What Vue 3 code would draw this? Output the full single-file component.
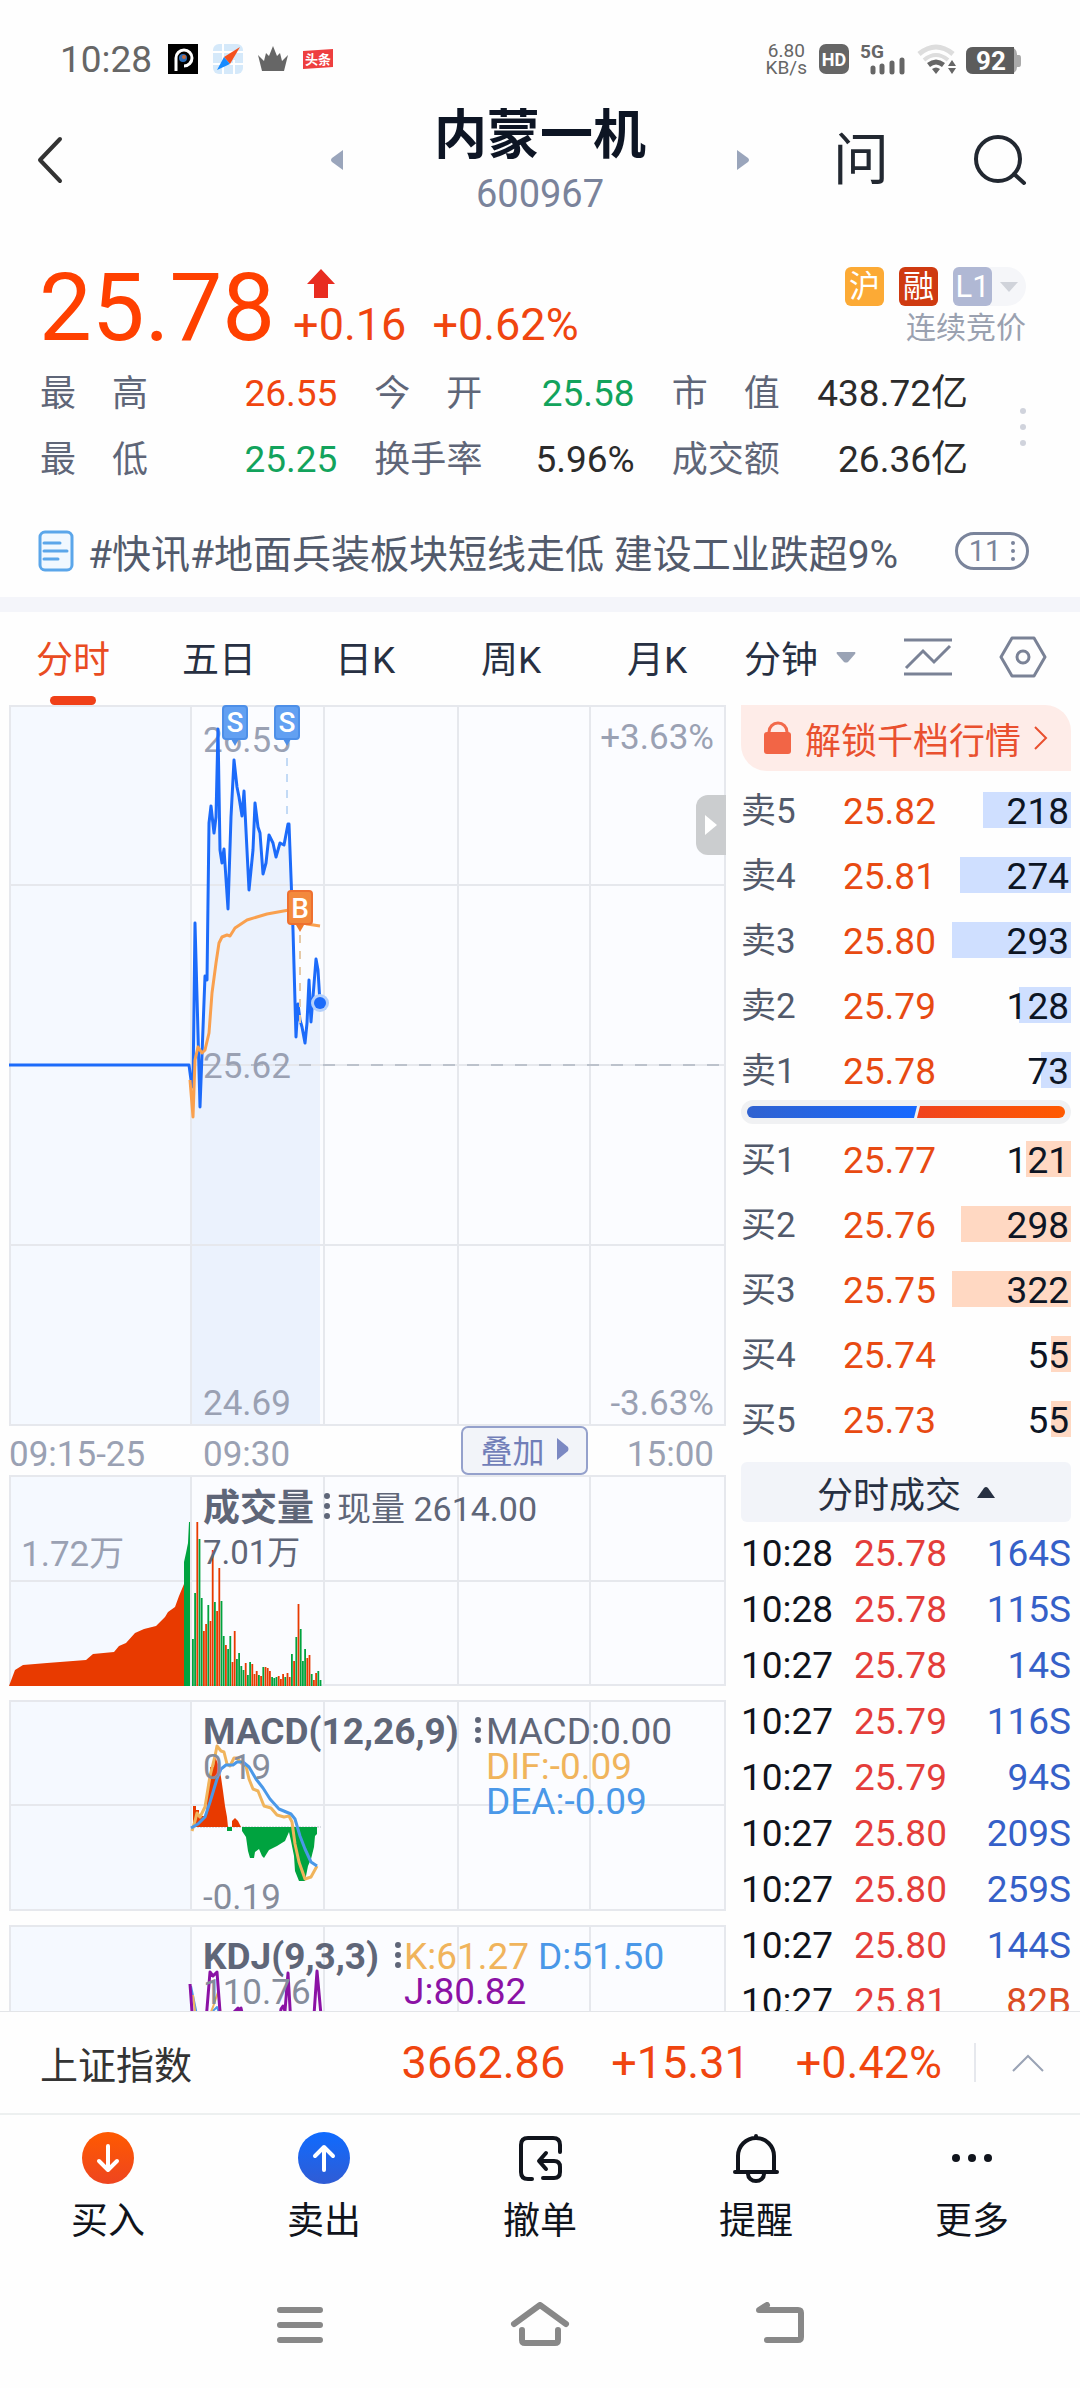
<script setup>
import { ref } from "vue";

// quote
const stats = [
  { label: "最高", value: "26.55", tone: "up" },
  { label: "今开", value: "25.58", tone: "down" },
  { label: "市值", value: "438.72亿", tone: "" },
  { label: "最低", value: "25.25", tone: "down" },
  { label: "换手率", value: "5.96%", tone: "" },
  { label: "成交额", value: "26.36亿", tone: "" },
];

const tabs = ["分时", "五日", "日K", "周K", "月K"];
const activeTab = ref("分时");

// order book
const asks = [
  { label: "卖5", price: "25.82", volume: 218 },
  { label: "卖4", price: "25.81", volume: 274 },
  { label: "卖3", price: "25.80", volume: 293 },
  { label: "卖2", price: "25.79", volume: 128 },
  { label: "卖1", price: "25.78", volume: 73 },
];
const bids = [
  { label: "买1", price: "25.77", volume: 121 },
  { label: "买2", price: "25.76", volume: 298 },
  { label: "买3", price: "25.75", volume: 322 },
  { label: "买4", price: "25.74", volume: 55 },
  { label: "买5", price: "25.73", volume: 55 },
];
const trades = [
  { time: "10:28", price: "25.78", volume: "164S" },
  { time: "10:28", price: "25.78", volume: "115S" },
  { time: "10:27", price: "25.78", volume: "14S" },
  { time: "10:27", price: "25.79", volume: "116S" },
  { time: "10:27", price: "25.79", volume: "94S" },
  { time: "10:27", price: "25.80", volume: "209S" },
  { time: "10:27", price: "25.80", volume: "259S" },
  { time: "10:27", price: "25.80", volume: "144S" },
  { time: "10:27", price: "25.81", volume: "82B" },
];

// charts
const columns = [182, 315, 449, 581];
const priceLine =
  "0,360 180,360 182,375 184,382 186,218 191,402 196,271 198,275 200,118 202,101 205,128 207,112 209,24 211,145 213,158 215,144 219,204 222,112 225,55 228,82 230,92 233,111 235,86 240,185 244,145 246,98 249,122 251,128 254,169 257,158 260,130 264,138 267,152 271,138 275,140 279,119 280,119 284,225 287,332 289,299 291,315 293,322 296,338 298,318 300,275 302,317 307,254 309,265 311,298";
const averageLine =
  "181,375 184,412 186,355 189,342 193,348 196,345 200,328 203,288 207,258 210,238 213,232 218,230 221,231 226,223 238,215 258,209 280,205 288,215 298,219 311,221";
const priceArea = "182,720 " + priceLine.split(" ").slice(2).join(" ") + " 311,720";
const auctionArea =
  "0,211 6,195 14,190 38,188 77,185 84,179 105,177 110,171 117,168 126,158 135,154 147,151 156,142 159,137 166,132 170,121 175,109 175,211";
const volumes = [
  47, 93, 164, 147, 88, 55, 62, 81, 65, 136, 84, 75, 118, 85, 50, 41, 37, 50, 24, 55,
  27, 33, 20, 16, 23, 11, 24, 22, 12, 15, 11, 10, 19, 19, 18, 15, 9, 8, 9, 10,
  7, 12, 9, 13, 9, 32, 25, 49, 82, 57, 25, 37, 28, 31, 12, 6, 13, 15, 6,
];
const volumeTones = "ggrggrrgrrgrrggrggrrggggrggrrrgrgrrrgggrrrgrrgrgrgggrrgrrgg";
const macdRed =
  "184,127 184,106 187,106 187,110 190,110 190,116 197,116 199,82 201,82 201,67 205,67 206,56 209,64 212,77 214,91 216,106 218,117 219,127";
const macdRedTail = "223,127 223,121 226,118 229,121 232,127";
const macdGreen =
  "218,127 218,131 223,131 223,127 233,127 233,131 237,137 239,151 241,158 245,158 246,152 250,149 253,156 255,158 260,150 268,146 276,141 280,132 282,141 285,156 286,171 290,181 296,181 299,166 302,159 305,147 306,136 308,134 308,127";
const difLine =
  "183,131 186,121 188,113 191,117 196,107 201,76 206,56 208,46 212,51 215,52 218,64 221,66 225,58 228,58 233,64 237,66 240,79 244,89 249,91 255,106 262,108 268,115 275,117 280,116 283,122 286,144 290,162 296,179 302,177 308,166";
const deaLine =
  "182,128 189,124 196,117 201,102 208,79 212,69 217,65 224,65 228,62 234,62 240,67 247,79 254,88 261,99 270,109 282,114 286,119 291,136 296,149 302,162 308,166";

// functions
function barWidth(row, side) {
  const max = Math.max(...side.map((item) => item.volume));
  return `${(row.volume / max) * 36}%`;
}
function volumeColor(index) {
  return volumeTones[index] === "r" ? "#e83a00" : "#00a33f";
}
</script>

<template>
  <div class="page">
    <div class="status">
      <span class="clock">10:28</span>
      <svg width="165" height="30" viewBox="0 0 165 30">
        <rect width="30" height="30" fill="#000" />
        <path d="M8 27V14a8 8 0 1 1 8 8" fill="none" stroke="#fff" stroke-width="3" />
        <circle cx="15" cy="14" r="4" fill="#2b6cb8" />
        <circle cx="16" cy="13" r="2" fill="#c56b3c" />
        <rect x="45" width="30" height="30" rx="6" fill="#d5e9fa" />
        <path d="M45 8h30M55 0v30M66 16v14M45 20h30" stroke="#fff" stroke-width="2" />
        <path d="M72 3 56 13l6 7z" fill="#f4511e" />
        <path d="M49 26l7-13 6 7z" fill="#168bff" />
        <path d="M90 11l6 6 2-8 3 3 4-10 4 10 3-3 2 8 6-6-4 16H94z" fill="#666" />
        <path d="M135 7l30-2v18l-30 2z" fill="#ee3f3f" />
        <text x="150" y="20" text-anchor="middle" font-size="13" font-weight="700" fill="#fff">头条</text>
      </svg>
      <div class="status-right">
        <span class="speed">6.80<br />KB/s</span>
        <svg width="202" height="32" viewBox="0 0 202 32">
          <rect y="1" width="30" height="30" rx="7" fill="#666" />
          <text x="15" y="23" text-anchor="middle" font-size="18" font-weight="700" fill="#fff">HD</text>
          <text x="41" y="15" font-size="19" font-weight="700" fill="#666">5G</text>
          <path d="M54 29v-4M63 29v-6M73 29v-9M83 29V17" stroke="#666" stroke-width="5" stroke-linecap="round" />
          <path d="M100 11q17-14 34 0" fill="none" stroke="#ddd" stroke-width="5" />
          <path d="M105 17q12-10 24 0" fill="none" stroke="#ddd" stroke-width="4" />
          <path d="M108 20q9-7 18 0l-3 4q-6-5-12 0zM113 26q4-3 8 0l-4 5z" fill="#666" />
          <path d="M129 23h8l-4-6zM129 25h8l-4 6z" fill="#666" />
          <rect x="147" y="4" width="51" height="27" rx="7" fill="#aaa" />
          <path d="M198 12h2q2 0 2 3v6q0 3-2 3h-2z" fill="#aaa" />
          <path d="M154 4h41v27h-41q-7 0-7-7V11q0-7 7-7z" fill="#5c5c5c" />
          <text x="172" y="27" text-anchor="middle" font-size="26" font-weight="700" fill="#fff">92</text>
        </svg>
      </div>
    </div>

    <header class="header">
      <button class="back" aria-label="返回">
        <svg width="26" height="48" viewBox="0 0 26 48">
          <path d="M23 3 3 24l20 21" fill="none" stroke="#333" stroke-width="4" stroke-linecap="round" stroke-linejoin="round" />
        </svg>
      </button>
      <div class="switcher">
        <button aria-label="上一只">
          <svg width="12" height="20" viewBox="0 0 12 20"><path d="M12 0v20L1 12q-2-2 0-4z" fill="#9aa5bb" /></svg>
        </button>
        <div class="name">
          <h1>内蒙一机</h1>
          <span>600967</span>
        </div>
        <button aria-label="下一只">
          <svg width="12" height="20" viewBox="0 0 12 20"><path d="M0 0v20l11-8q2-2 0-4z" fill="#9aa5bb" /></svg>
        </button>
      </div>
      <div class="tools">
        <button class="ask">问</button>
        <button aria-label="搜索">
          <svg width="56" height="56" viewBox="0 0 56 56">
            <circle cx="26" cy="27" r="22" fill="none" stroke="#222831" stroke-width="4" />
            <path d="M42 42l10 9" stroke="#222831" stroke-width="4" stroke-linecap="round" />
          </svg>
        </button>
      </div>
    </header>

    <section class="quote">
      <strong class="price">25.78</strong>
      <div class="change">
        <svg width="28" height="30" viewBox="0 0 28 30"><path d="M14 0l14 15h-7v14H7V15H0z" fill="#e82c20" /></svg>
        <div><span>+0.16</span><span>+0.62%</span></div>
      </div>
      <div class="marks">
        <div class="badges">
          <span class="badge hu">沪</span>
          <span class="badge rong">融</span>
          <button class="level">
            <span class="badge">L1</span>
            <svg width="18" height="10" viewBox="0 0 18 10"><path d="M0 0h18L9 10z" fill="#d0d3da" /></svg>
          </button>
        </div>
        <span>连续竞价</span>
      </div>
    </section>

    <section class="stats">
      <dl>
        <div v-for="item in stats" :key="item.label">
          <dt><span v-for="char in item.label" :key="char">{{ char }}</span></dt>
          <dd :class="item.tone">{{ item.value }}</dd>
        </div>
      </dl>
      <svg width="8" height="40" viewBox="0 0 8 40" fill="#d0d3dc">
        <circle cx="4" cy="4" r="3" />
        <circle cx="4" cy="20" r="3" />
        <circle cx="4" cy="36" r="3" />
      </svg>
    </section>

    <div class="news">
      <svg width="36" height="42" viewBox="0 0 36 42" fill="none" stroke="#5ba6ea" stroke-width="3" stroke-linecap="round">
        <rect x="2" y="2" width="32" height="38" rx="5" fill="#f1f8ff" />
        <path d="M6 13h16M6 21h23M6 29h14" />
      </svg>
      <a href="#">#快讯#地面兵装板块短线走低 建设工业跌超9%</a>
      <button class="count">
        11
        <svg width="4" height="20" viewBox="0 0 4 20" fill="#7a849b">
          <circle cx="2" cy="2" r="2" />
          <circle cx="2" cy="10" r="2" />
          <circle cx="2" cy="18" r="2" />
        </svg>
      </button>
    </div>

    <nav class="tabs">
      <button
        v-for="tab in tabs"
        :key="tab"
        :class="{ active: tab === activeTab }"
        @click="activeTab = tab"
      >
        {{ tab }}
      </button>
      <div class="tab-tools">
        <button class="minute">
          分钟
          <svg width="20" height="11" viewBox="0 0 20 11"><path d="M1 0h18q1 1 0 2l-7 8q-2 1-4 0L1 2q-1-1 0-2z" fill="#9aa3b5" /></svg>
        </button>
        <button aria-label="画线">
          <svg width="50" height="38" viewBox="0 0 50 38" fill="none" stroke="#7a8296" stroke-width="3">
            <path d="M1 2h48M1 36h48M3 30l17-17 11 11L47 8" />
          </svg>
        </button>
        <button aria-label="设置">
          <svg width="48" height="42" viewBox="0 0 48 42" fill="none" stroke="#7a8296" stroke-width="3">
            <path d="M13 2h22l11 19-11 19H13L2 21z" stroke-linejoin="round" />
            <circle cx="24" cy="21" r="6" />
          </svg>
        </button>
      </div>
    </nav>

    <main class="market">
      <div class="charts">
        <div class="main-chart">
          <svg viewBox="0 0 717 721">
            <rect width="717" height="721" fill="#fbfcff" />
            <rect width="182" height="721" fill="#f5f9ff" />
            <text x="194" y="47" class="axis">26.55</text>
            <polygon :points="priceArea" fill="#ebf2fd" />
            <g class="grid">
              <path d="M0 1h717M0 180h717M0 360h717M0 540h717M0 720h717M1 0v721M716 0v721" />
              <path v-for="x in columns" :key="x" :d="`M${x} 0v721`" />
            </g>
            <path d="M194 360h523" stroke="#bcc2cc" stroke-width="2" stroke-dasharray="12 12" />
            <text x="194" y="373" class="axis">25.62</text>
            <text x="194" y="710" class="axis">24.69</text>
            <text x="705" y="44" class="axis" text-anchor="end">+3.63%</text>
            <text x="705" y="710" class="axis" text-anchor="end">-3.63%</text>
            <path d="M278 53v60" stroke="#8ab8ec" stroke-width="1" stroke-dasharray="8 8" />
            <polyline :points="priceLine" class="line" stroke="#1c6bfa" stroke-width="3" />
            <polyline :points="averageLine" class="line" stroke="#f9a04e" stroke-width="3" />
            <path d="M291 230v88" stroke="#e5c9a6" stroke-width="2" stroke-dasharray="8 8" />
            <circle cx="311" cy="298" r="9" fill="#b5d0fb" />
            <circle cx="311" cy="298" r="6" fill="#1c6bfa" />
            <g v-for="x in [226, 278]" :key="x">
              <path :d="`M${x - 4} 34h8l-4 7z`" fill="#4d8fe8" />
              <rect :x="x - 12" y="1" width="24" height="33" rx="3" fill="#62a0f2" stroke="#4d8fe8" stroke-width="2" />
              <text :x="x" y="27" class="flag">S</text>
            </g>
            <path d="M287 220h8l-4 7z" fill="#f07a2c" />
            <rect x="279" y="186" width="24" height="33" rx="3" fill="#f3893c" stroke="#ee7030" stroke-width="2" />
            <text x="291" y="213" class="flag">B</text>
          </svg>
          <button class="fold" aria-label="收起">
            <svg width="12" height="20" viewBox="0 0 12 20"><path d="M0 0l12 10L0 20z" fill="#fff" /></svg>
          </button>
        </div>

        <div class="times">
          <span>09:15-25</span>
          <span>09:30</span>
          <button>
            叠加
            <svg width="12" height="22" viewBox="0 0 12 22"><path d="M0 0l11 9q1 2 0 4L0 22z" fill="#7b88c2" /></svg>
          </button>
          <span class="end">15:00</span>
        </div>

        <svg viewBox="0 0 717 211">
          <rect width="717" height="211" fill="#fbfcff" />
          <rect width="182" height="211" fill="#f5f9ff" />
          <g class="grid">
            <path d="M0 1h717M0 106h717M0 210h717M1 0v211M716 0v211" />
            <path v-for="x in columns" :key="x" :d="`M${x} 0v211`" />
          </g>
          <polygon :points="auctionArea" fill="#e83a00" />
          <path d="M175 211V87l2-9 2-10 1-21h1v164z" fill="#00a33f" />
          <rect
            v-for="(height, i) in volumes"
            :key="i"
            :x="183 + i * 2.2"
            :y="211 - height"
            width="1.8"
            :height="height"
            :fill="volumeColor(i)"
          />
          <text x="194" y="46" class="title">成交量</text>
          <path d="M318 21v28" class="dots" />
          <text x="328" y="46" font-size="34" fill="#5f6678">现量 2614.00</text>
          <text x="194" y="89" font-size="33" fill="#5f6678">7.01万</text>
          <text x="12" y="91" class="axis">1.72万</text>
        </svg>

        <svg viewBox="0 0 717 211">
          <rect width="717" height="211" fill="#fbfcff" />
          <rect width="182" height="211" fill="#f5f9ff" />
          <g class="grid">
            <path d="M0 1h717M0 105h717M0 210h717M1 0v211M716 0v211" />
            <path v-for="x in columns" :key="x" :d="`M${x} 0v211`" />
          </g>
          <path d="M182 127h130" stroke="#bcc2cc" stroke-dasharray="2 1" />
          <polygon :points="macdRed" fill="#e83a00" />
          <polygon :points="macdRedTail" fill="#e83a00" />
          <polygon :points="macdGreen" fill="#00a33f" />
          <polyline :points="difLine" class="line" stroke="#f0b45c" stroke-width="3" />
          <polyline :points="deaLine" class="line" stroke="#4a98e8" stroke-width="3" />
          <text x="194" y="44" class="title">MACD(12,26,9)</text>
          <path d="M469 20v28" class="dots" />
          <text x="477" y="44" class="value" fill="#5f6678">MACD:0.00</text>
          <text x="477" y="79" class="value" fill="#f0b45c">DIF:-0.09</text>
          <text x="477" y="114" class="value" fill="#4a98e8">DEA:-0.09</text>
          <text x="194" y="79" class="axis deep">0.19</text>
          <text x="194" y="209" class="axis deep">-0.19</text>
        </svg>

        <svg viewBox="0 0 717 211">
          <rect width="717" height="211" fill="#fbfcff" />
          <rect width="182" height="211" fill="#f5f9ff" />
          <g class="grid">
            <path d="M0 1h717M0 105h717M0 210h717M1 0v211M716 0v211" />
            <path v-for="x in columns" :key="x" :d="`M${x} 0v211`" />
          </g>
          <polyline points="182,61 188,90 196,120 204,86 208,82 214,100" class="line" stroke="#4a98e8" stroke-width="2" />
          <polyline points="184,70 190,120 198,96 204,82 209,67 213,100" class="line" stroke="#f0b45c" stroke-width="2" />
          <polyline
            points="181,59 184,100 195,120 201,47 204,51 208,47 212,100 226,86 229,83 232,86 232,83 240,120 268,110 272,84 274,81 276,86 279,48 282,100 295,120 305,90 308,46 312,90"
            class="line"
            stroke="#8b12a5"
            stroke-width="3"
          />
          <text x="194" y="44" class="title">KDJ(9,3,3)</text>
          <path d="M389 20v28" class="dots" />
          <text x="395" y="44" class="value" fill="#f0b45c">K:61.27</text>
          <text x="529" y="44" class="value" fill="#4a98e8">D:51.50</text>
          <text x="395" y="79" class="value" fill="#8b12a5">J:80.82</text>
          <text x="194" y="79" class="axis deep">110.76</text>
        </svg>
      </div>

      <aside class="depth">
        <a class="unlock" href="#">
          <svg width="28" height="34" viewBox="0 0 28 34">
            <path d="M5 13V11a9 9 0 0 1 18 0v2" fill="none" stroke="#f26a4b" stroke-width="3" />
            <rect y="11" width="27" height="22" rx="3" fill="#f26546" />
          </svg>
          解锁千档行情
          <svg width="14" height="24" viewBox="0 0 14 24"><path d="M1 1l11 11L1 23" fill="none" stroke="#e9502f" stroke-width="2" /></svg>
        </a>
        <div v-for="row in asks" :key="row.label" class="order ask-side">
          <i :style="{ width: barWidth(row, asks) }"></i>
          <span>{{ row.label }}</span>
          <b>{{ row.price }}</b>
          <em>{{ row.volume }}</em>
        </div>
        <div class="ratio">
          <svg viewBox="0 0 318 12">
            <defs>
              <linearGradient id="sell"><stop stop-color="#3062d0" /><stop offset="1" stop-color="#1668ff" /></linearGradient>
              <linearGradient id="buy"><stop stop-color="#f0431e" /><stop offset="1" stop-color="#ff5a00" /></linearGradient>
            </defs>
            <path d="M6 0h164l-3 12H6A6 6 0 0 1 6 0z" fill="url(#sell)" />
            <path d="M173 0h139a6 6 0 0 1 0 12H170z" fill="url(#buy)" />
          </svg>
        </div>
        <div v-for="row in bids" :key="row.label" class="order bid-side">
          <i :style="{ width: barWidth(row, bids) }"></i>
          <span>{{ row.label }}</span>
          <b>{{ row.price }}</b>
          <em>{{ row.volume }}</em>
        </div>
        <button class="deals">
          分时成交
          <svg width="18" height="11" viewBox="0 0 18 11"><path d="M0 11L7 1q2-2 4 0l7 10z" fill="#273042" /></svg>
        </button>
        <table class="trades">
          <tbody>
            <tr v-for="(trade, i) in trades" :key="i">
              <td>{{ trade.time }}</td>
              <td>{{ trade.price }}</td>
              <td :class="{ buy: trade.volume.endsWith('B') }">{{ trade.volume }}</td>
            </tr>
          </tbody>
        </table>
      </aside>
    </main>

    <div class="index">
      <span class="index-name">上证指数</span>
      <span>3662.86</span>
      <span>+15.31</span>
      <span>+0.42%</span>
      <button aria-label="展开">
        <svg width="32" height="18" viewBox="0 0 32 18"><path d="M1 17L16 2l15 15" fill="none" stroke="#9aa3b5" stroke-width="2" /></svg>
      </button>
    </div>

    <div class="actions">
      <button>
        <svg width="52" height="52" viewBox="0 0 52 52">
          <defs><linearGradient id="in" x2="0" y2="1"><stop stop-color="#ff5a00" /><stop offset="1" stop-color="#ee4520" /></linearGradient></defs>
          <circle cx="26" cy="26" r="26" fill="url(#in)" />
          <path d="M26 14v23M17 29l9 9 9-9" fill="none" stroke="#fff" stroke-width="4" stroke-linecap="round" stroke-linejoin="round" />
        </svg>
        买入
      </button>
      <button>
        <svg width="52" height="52" viewBox="0 0 52 52">
          <defs><linearGradient id="out" x2="0" y2="1"><stop stop-color="#0f6bff" /><stop offset="1" stop-color="#305cd4" /></linearGradient></defs>
          <circle cx="26" cy="26" r="26" fill="url(#out)" />
          <path d="M26 38V15M17 24l9-9 9 9" fill="none" stroke="#fff" stroke-width="4" stroke-linecap="round" stroke-linejoin="round" />
        </svg>
        卖出
      </button>
      <button>
        <svg width="52" height="52" viewBox="0 0 52 52" fill="none" stroke="#10141c" stroke-width="4" stroke-linecap="round" stroke-linejoin="round">
          <path d="M18 47h-4q-7 0-7-7V13q0-7 7-7h25q7 0 7 7v7" />
          <path d="M32 21l-7 8 7 8M26 29h14q6 0 6 6v5q0 6-6 6H29" />
        </svg>
        撤单
      </button>
      <button>
        <svg width="52" height="52" viewBox="0 0 52 52" fill="none" stroke="#10141c" stroke-width="4" stroke-linecap="round">
          <path d="M8 40V24a18 18 0 0 1 36 0v16M5 40h42M26 6V4" />
          <path d="M18 42a8 7 0 0 0 16 0" />
        </svg>
        提醒
      </button>
      <button>
        <svg width="52" height="52" viewBox="0 0 52 52" fill="#10141c">
          <circle cx="10" cy="26" r="4" />
          <circle cx="26" cy="26" r="4" />
          <circle cx="42" cy="26" r="4" />
        </svg>
        更多
      </button>
    </div>

    <div class="system">
      <button aria-label="任务">
        <svg width="60" height="46" viewBox="0 0 60 46"><path d="M10 8h40M10 23h40M10 38h40" stroke="#888" stroke-width="6" stroke-linecap="round" /></svg>
      </button>
      <button aria-label="主页">
        <svg width="60" height="46" viewBox="0 0 60 46" fill="none" stroke="#888" stroke-width="6" stroke-linecap="round" stroke-linejoin="round">
          <path d="M4 22L30 3l26 19M12 28v10q0 3 3 3h30q3 0 3-3V28" />
        </svg>
      </button>
      <button aria-label="后退">
        <svg width="60" height="46" viewBox="0 0 60 46" fill="none" stroke="#888" stroke-width="6" stroke-linecap="round" stroke-linejoin="round">
          <path d="M17 38h31q3 0 3-3V11q0-3-3-3H9l8-5" />
        </svg>
      </button>
    </div>
  </div>
</template>

<style>
body {
  margin: 0;
  background: #fefefe;
}
</style>

<style scoped>
.page {
  display: flex;
  flex-direction: column;
  height: 100vh;
  overflow: hidden;
  background: #fefefe;
  color: #222831;
  font-family: Roboto, "Noto Sans CJK SC", sans-serif;
}
button {
  display: flex;
  align-items: center;
  justify-content: center;
  padding: 0;
  border: 0;
  background: none;
  color: inherit;
  font: inherit;
}
a {
  color: inherit;
  text-decoration: none;
}
svg {
  display: block;
  flex-shrink: 0;
}

/* status bar */
.status {
  display: flex;
  align-items: center;
  gap: 16px;
  height: 58px;
  padding: 30px 59px 0 60px;
  color: #666;
}
.clock {
  font-size: 37px;
}
.status-right {
  display: flex;
  align-items: center;
  gap: 12px;
  margin-left: auto;
}
.speed {
  font-size: 19px;
  line-height: 17px;
  text-align: center;
}

/* header */
.header {
  display: grid;
  grid-template-columns: 1fr 418px 1fr;
  align-items: center;
  padding-top: 14px;
}
.back {
  justify-self: start;
  margin-left: 37px;
}
.switcher {
  display: flex;
  align-items: center;
  justify-content: space-between;
}
.name {
  text-align: center;
  font-size: 38px;
  line-height: 48px;
  color: #7a839b;
}
.name h1 {
  margin: 0;
  font-size: 53px;
  line-height: 68px;
  font-weight: 700;
  color: #0d1524;
}
.tools {
  display: flex;
  align-items: center;
  justify-content: space-between;
  padding: 0 52px 0 84px;
}
.ask {
  font-size: 56px;
  line-height: 60px;
}

/* quote */
.quote {
  display: flex;
  align-items: center;
  gap: 18px;
  padding: 40px 54px 0 39px;
  color: #f0450f;
}
.price {
  font-size: 94px;
  line-height: 100px;
  font-weight: 400;
  color: #ff4000;
}
.change > svg {
  margin-left: 14px;
}
.change > div {
  display: flex;
  gap: 26px;
  padding-top: 4px;
  font-size: 45px;
  line-height: 44px;
}
.marks {
  display: flex;
  flex-direction: column;
  align-items: flex-end;
  gap: 4px;
  margin-left: auto;
  padding-bottom: 3px;
  font-size: 30px;
  line-height: 36px;
  color: #9aa1b0;
}
.badges {
  display: flex;
  gap: 15px;
}
.badge {
  width: 39px;
  height: 39px;
  border-radius: 6px;
  background: #b0b8d4;
  color: #fff;
  font-size: 31px;
  line-height: 39px;
  text-align: center;
}
.hu {
  background: #fcaa35;
}
.rong {
  background: #cf3a10;
}
.level {
  gap: 8px;
  padding-right: 8px;
  border-radius: 6px 20px 20px 6px;
  background: #f5f6f9;
}
.stats {
  display: flex;
  align-items: center;
  justify-content: space-between;
  padding: 3px 53px 0 40px;
}
.stats dl {
  display: grid;
  grid-template-columns: 297fr 260fr 296fr;
  column-gap: 37px;
  flex: 1;
  margin: 0 51px 0 0;
}
.stats dl > div {
  display: flex;
  justify-content: space-between;
  line-height: 66px;
}
.stats dt {
  display: flex;
  justify-content: space-between;
  width: 108px;
  font-size: 36px;
  color: #5f6678;
}
.stats dd {
  margin: 0;
  font-size: 37px;
  color: #2b2b2b;
}
.stats .up {
  color: #f0450f;
}
.stats .down {
  color: #12a35c;
}
.news {
  display: flex;
  align-items: center;
  gap: 14px;
  height: 92px;
  padding: 12px 51px 0 38px;
  border-bottom: 15px solid #f4f5fa;
  font-size: 39px;
  color: #525a6b;
}
.news a {
  white-space: nowrap;
}
.count {
  gap: 10px;
  box-sizing: border-box;
  width: 74px;
  height: 38px;
  margin-left: auto;
  border: 3px solid #7a849b;
  border-radius: 19px;
  font-size: 29px;
  color: #7a849b;
}

/* tabs */
.tabs {
  display: grid;
  grid-template-columns: repeat(5, 146fr) 350fr;
  height: 93px;
  font-size: 37px;
  color: #273042;
}
.tabs > button {
  position: relative;
  padding-bottom: 3px;
}
.tabs > .active {
  color: #e94c22;
}
.tabs > .active::after {
  content: "";
  position: absolute;
  bottom: 0;
  width: 46px;
  height: 9px;
  border-radius: 5px;
  background: #f04018;
}
.tab-tools {
  display: flex;
  align-items: center;
  justify-content: space-between;
  padding: 0 33px 3px 14px;
}
.minute {
  gap: 18px;
}

/* charts */
.market {
  display: grid;
  grid-template-columns: minmax(0, 1fr) 330px;
  column-gap: 15px;
  flex: 1;
  min-height: 0;
  overflow: hidden;
  padding: 0 9px;
}
.charts > svg,
.main-chart > svg {
  width: 100%;
}
.charts > svg {
  margin-bottom: 14px;
}
.main-chart {
  position: relative;
}
.fold {
  position: absolute;
  top: 90px;
  right: 0;
  width: 30px;
  height: 60px;
  border-radius: 12px 0 0 12px;
  background: #cbcdcf;
}
.grid {
  stroke: #e6e8ed;
  stroke-width: 2;
}
.line {
  fill: none;
  stroke-linejoin: round;
}
.axis {
  font-size: 35px;
  fill: #9aa1b3;
}
.deep {
  fill: #858c9b;
}
.title {
  font-size: 37px;
  font-weight: 700;
  fill: #5f6678;
}
.value {
  font-size: 37px;
}
.dots {
  stroke: #5f6678;
  stroke-width: 6;
  stroke-linecap: round;
  stroke-dasharray: 0 10;
}
.flag {
  font-size: 28px;
  font-weight: 500;
  fill: #fff;
  text-anchor: middle;
}
.times {
  display: grid;
  grid-template-columns: 194px 1fr 127px 138px;
  align-items: center;
  height: 49px;
  font-size: 35px;
  color: #9aa1b3;
}
.times button {
  gap: 12px;
  box-sizing: border-box;
  height: 49px;
  padding-bottom: 4px;
  border: 2px solid #95a1cc;
  border-radius: 7px;
  background: #f2f4f9;
  font-size: 32px;
  color: #717eb8;
}
.times span {
  padding-top: 8px;
}
.times .end {
  padding-right: 12px;
  text-align: right;
}

/* depth */
.unlock {
  display: flex;
  align-items: center;
  justify-content: center;
  gap: 13px;
  height: 66px;
  margin-bottom: 8px;
  border-radius: 0 26px 0 26px;
  background: #feece8;
  color: #e9502f;
  font-size: 36px;
}
.order {
  display: grid;
  grid-template-columns: 102px 1fr auto;
  position: relative;
  padding: 0 2px 0 0;
  font-size: 37px;
  line-height: 65px;
}
.order i {
  position: absolute;
  top: 13px;
  right: 0;
  height: 36px;
}
.order span {
  font-size: 35px;
  color: #525a6b;
}
.order b {
  font-weight: 400;
  color: #e84a12;
}
.order em {
  position: relative;
  font-style: normal;
  color: #0d1524;
}
.ask-side i {
  background: #cfdfff;
}
.bid-side i {
  background: #ffd8c2;
}
.ratio {
  margin: -4px 0 4px;
  padding: 6px;
  border-radius: 12px;
  background: #f0f1f3;
}
.deals {
  gap: 16px;
  width: 100%;
  height: 60px;
  margin: 9px 0 4px;
  border-radius: 6px;
  background: #f2f4f9;
  font-size: 36px;
  color: #273042;
}
.trades {
  width: 100%;
  border-collapse: collapse;
  font-size: 37px;
  line-height: 56px;
  color: #10141c;
}
.trades td {
  padding: 0;
}
.trades td:nth-child(1) {
  width: 113px;
}
.trades td:nth-child(2) {
  color: #e43d3a;
}
.trades td:nth-child(3) {
  text-align: right;
  color: #3560c8;
}
.trades td.buy {
  color: #dc4d25;
}

/* footer */
.index {
  display: flex;
  align-items: center;
  gap: 46px;
  height: 101px;
  padding: 0 36px 0 40px;
  border-top: 1px solid #e3e5e8;
  border-bottom: 2px solid #edf0f0;
  font-size: 45px;
  color: #f0450f;
  background: #fefefe;
}
.index-name {
  margin-right: auto;
  font-size: 38px;
  color: #333;
}
.index button {
  height: 39px;
  margin-left: -14px;
  padding-left: 36px;
  border-left: 2px solid #e6e8ed;
}
.actions {
  display: grid;
  grid-template-columns: repeat(5, 1fr);
  padding-top: 17px;
  font-size: 37px;
  line-height: 50px;
  color: #10141c;
}
.actions button {
  flex-direction: column;
  gap: 13px;
}
.system {
  display: flex;
  justify-content: center;
  gap: 180px;
  padding: 55px 0 40px;
}
</style>
